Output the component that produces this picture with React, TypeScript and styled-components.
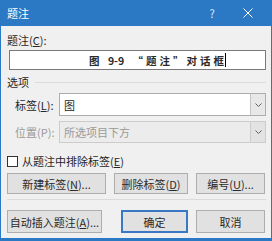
import React from "react";
import styled, { createGlobalStyle } from "styled-components";

const GlobalStyle = createGlobalStyle`
  html, body {
    margin: 0;
    padding: 0;
    background: #ffffff;
  }
  body {
    font-family: "Noto Sans CJK SC", "Noto Sans", sans-serif;
  }
`;

const Window = styled.div`
  width: 272px;
  height: 241px;
  box-sizing: border-box;
  background: #f0f0f0;
  border: 1px solid #2b79c4;
  border-top: none;
  border-bottom-width: 3px;
  display: flex;
  flex-direction: column;
  font-size: 11px;
  color: #262626;
`;

const TitleBar = styled.header`
  height: 26px;
  background: #2b79c4;
  display: flex;
  align-items: center;
  color: #ffffff;
  margin: 0 -1px;
  padding-left: 7px;
`;

const Title = styled.span`
  flex: 1;
  font-size: 11px;
  line-height: 14px;
`;

const TitleButton = styled.span`
  width: 36px;
  display: flex;
  align-items: center;
  justify-content: center;
  font-size: 11px;
  color: #dfeaf6;
`;

const Content = styled.div`
  padding: 0 5px 0 6px;
  display: flex;
  flex-direction: column;
`;

const Label = styled.div<{ $disabled?: boolean }>`
  line-height: 14px;
  white-space: nowrap;
  color: ${(p) => (p.$disabled ? "#9a9a9a" : "#262626")};
`;

const CaptionLabel = styled(Label)`
  margin-top: 7px;
`;

const CaptionInput = styled.div`
  margin: 3px 0 0 2px;
  height: 20px;
  box-sizing: border-box;
  background: #ffffff;
  border: 1px solid #7a7a7a;
  display: flex;
  align-items: center;
  padding-left: 79px;
  font-size: 10.5px;
  font-weight: 700;
  letter-spacing: 3px;
  color: #2a2a2a;
  white-space: pre;
`;

const Tight = styled.span`
  letter-spacing: 0;
  margin-right: 3px;
`;

const Caret = styled.span`
  display: inline-block;
  width: 1px;
  height: 14px;
  background: #000;
  margin-left: -2px;
`;

const GroupHeader = styled.div`
  margin-top: 5px;
  display: flex;
  align-items: center;
  gap: 6px;
  line-height: 14px;
`;

const GroupLine = styled.div`
  flex: 1;
  height: 1px;
  background: #dcdcdc;
`;

const FieldRow = styled.div<{ $top: number; $height: number }>`
  margin-top: ${(p) => p.$top}px;
  height: ${(p) => p.$height}px;
  display: flex;
  align-items: center;
  padding-left: 8px;
`;

const FieldLabel = styled(Label)`
  width: 44px;
`;

const Select = styled.div<{ $disabled?: boolean }>`
  flex: 1;
  height: 100%;
  box-sizing: border-box;
  display: flex;
  align-items: stretch;
  border: 1px solid ${(p) => (p.$disabled ? "#cccccc" : "#adadad")};
  background: ${(p) => (p.$disabled ? "#ececec" : "#ffffff")};
  color: ${(p) => (p.$disabled ? "#9a9a9a" : "#262626")};
`;

const SelectValue = styled.span`
  flex: 1;
  display: flex;
  align-items: center;
  padding-left: 4px;
`;

const SelectArrow = styled.span<{ $disabled?: boolean }>`
  width: 14px;
  display: flex;
  align-items: center;
  justify-content: center;
  background: ${(p) => (p.$disabled ? "#e3e3e3" : "#e8e8e8")};
  border-left: 1px solid ${(p) => (p.$disabled ? "#cccccc" : "#c4c4c4")};
`;

const CheckRow = styled.label`
  margin-top: 11px;
  display: flex;
  align-items: center;
  gap: 4px;
  line-height: 14px;
`;

const CheckBox = styled.span`
  width: 11px;
  height: 11px;
  box-sizing: border-box;
  border: 1px solid #333333;
  background: #ffffff;
`;

const ButtonRow = styled.div<{ $top: number; $height: number }>`
  margin-top: ${(p) => p.$top}px;
  height: ${(p) => p.$height}px;
  display: flex;
  gap: 8px;
`;

const Button = styled.div<{ $width: number; $primary?: boolean; $skip?: number }>`
  width: ${(p) => p.$width}px;
  margin-left: ${(p) => p.$skip || 0}px;
  box-sizing: border-box;
  display: flex;
  align-items: center;
  justify-content: center;
  background: #e1e1e1;
  border: 1px solid ${(p) => (p.$primary ? "#3a78c4" : "#adadad")};
  box-shadow: ${(p) => (p.$primary ? "inset 0 0 0 1px #3a78c4" : "none")};
  white-space: nowrap;
  color: #2a2a2a;
`;

const Separator = styled.div`
  margin-top: 5px;
  height: 1px;
  background: #dadada;
`;

const Chevron = () => (
  <svg width="7" height="4" viewBox="0 0 7 4">
    <path d="M0.5 0.5 L3.5 3.5 L6.5 0.5" fill="none" stroke="#606060" strokeWidth="1" />
  </svg>
);

const CloseIcon = () => (
  <svg width="10" height="10" viewBox="0 0 10 10">
    <path d="M0.5 0.5 L9.5 9.5 M9.5 0.5 L0.5 9.5" stroke="#ffffff" strokeWidth="1" />
  </svg>
);

const App = () => {
  return (
    <>
      <GlobalStyle />
      <Window>
        <TitleBar>
          <Title>题注</Title>
          <TitleButton>?</TitleButton>
          <TitleButton style={{ marginRight: 6 }}>
            <CloseIcon />
          </TitleButton>
        </TitleBar>
        <Content>
          <CaptionLabel>
            题注(<u>C</u>):
          </CaptionLabel>
          <CaptionInput>
            {"图 "}
            <Tight>9-9</Tight>
            {" “题注”对话框"}
            <Caret />
          </CaptionInput>

          <GroupHeader>
            <span>选项</span>
            <GroupLine />
          </GroupHeader>

          <FieldRow $top={4} $height={23}>
            <FieldLabel>
              标签(<u>L</u>):
            </FieldLabel>
            <Select>
              <SelectValue>图</SelectValue>
              <SelectArrow>
                <Chevron />
              </SelectArrow>
            </Select>
          </FieldRow>

          <FieldRow $top={5} $height={22}>
            <FieldLabel $disabled>位置(P):</FieldLabel>
            <Select $disabled>
              <SelectValue>所选项目下方</SelectValue>
              <SelectArrow $disabled>
                <Chevron />
              </SelectArrow>
            </Select>
          </FieldRow>

          <CheckRow>
            <CheckBox />
            <span>
              从题注中排除标签(<u>E</u>)
            </span>
          </CheckRow>

          <ButtonRow $top={5} $height={21}>
            <Button $width={99}>
              新建标签(<u>N</u>)...
            </Button>
            <Button $width={74}>
              删除标签(<u>D</u>)
            </Button>
            <Button $width={69}>
              编号(<u>U</u>)...
            </Button>
          </ButtonRow>

          <Separator />

          <ButtonRow $top={10} $height={23}>
            <Button $width={95}>
              自动插入题注(<u>A</u>)...
            </Button>
            <Button $width={67} $primary $skip={11}>
              确定
            </Button>
            <Button $width={69}>取消</Button>
          </ButtonRow>
        </Content>
      </Window>
    </>
  );
};

export default App;
